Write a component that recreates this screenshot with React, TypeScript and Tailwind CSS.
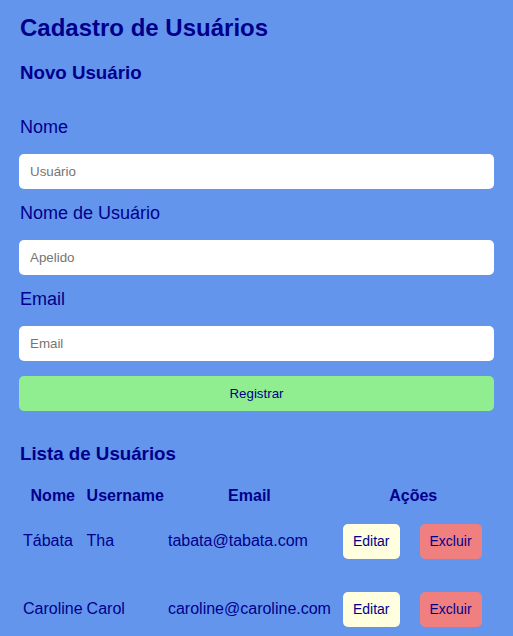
const usuarios = [
  { nome: 'Tábata', username: 'Tha', email: 'tabata@tabata.com' },
  { nome: 'Caroline', username: 'Carol', email: 'caroline@caroline.com' },
];

function Campo({ label, placeholder }: { label: string; placeholder: string }) {
  return (
    <>
      <label className="block mt-[14px] first:mt-0 mb-4 text-[18px] leading-[21px]">{label}</label>
      <input
        type="text"
        placeholder={placeholder}
        className="block -mx-px w-[calc(100%+2px)] h-[35px] rounded-[5px] bg-white pl-[11px] text-[13.33px] text-black placeholder:text-[#757575] outline-none"
      />
    </>
  );
}

export default function App() {
  return (
    <div className="min-h-screen bg-[#6495ED] px-5 pt-[14px] pb-5 text-[#00008B] font-['Liberation_Sans',Arial,sans-serif]">
      <h2 className="text-[24px] leading-[28px] font-bold">Cadastro de Usuários</h2>

      <h3 className="mt-5 text-[18.72px] leading-[22px] font-bold">Novo Usuário</h3>
      <form className="mt-[33px]" onSubmit={(e) => e.preventDefault()}>
        <Campo label="Nome" placeholder="Usuário" />
        <Campo label="Nome de Usuário" placeholder="Apelido" />
        <Campo label="Email" placeholder="Email" />
        <button
          type="submit"
          className="mt-[15px] block -mx-px w-[calc(100%+2px)] h-[35px] rounded-[5px] bg-[#90EE90] text-[13.33px] text-[#00008B]"
        >
          Registrar
        </button>
      </form>

      <h3 className="mt-8 mb-[19px] text-[18.72px] leading-[22px] font-bold">Lista de Usuários</h3>
      <table className="border-separate border-spacing-[2px] text-[16px] leading-[18px]">
        <thead>
          <tr>
            <th className="p-px font-bold">Nome</th>
            <th className="p-px font-bold">Username</th>
            <th className="p-px font-bold">Email</th>
            <th className="p-px font-bold">Ações</th>
          </tr>
        </thead>
        <tbody>
          {usuarios.map((u) => (
            <tr key={u.email}>
              <td className="p-px h-[66px] align-middle">{u.nome}</td>
              <td className="p-px align-middle">{u.username}</td>
              <td className="p-px align-middle">{u.email}</td>
              <td className="p-px align-middle whitespace-nowrap">
                <button className="ml-[8px] mr-[10px] h-[35px] rounded-[5px] bg-[#FFFFE0] px-[10px] text-[14px] text-[#00008B]">
                  Editar
                </button>
                <button className="ml-[10px] mr-[10px] h-[35px] rounded-[5px] bg-[#F08080] px-[10px] text-[14px] text-[#00008B]">
                  Excluir
                </button>
              </td>
            </tr>
          ))}
        </tbody>
      </table>
    </div>
  );
}
